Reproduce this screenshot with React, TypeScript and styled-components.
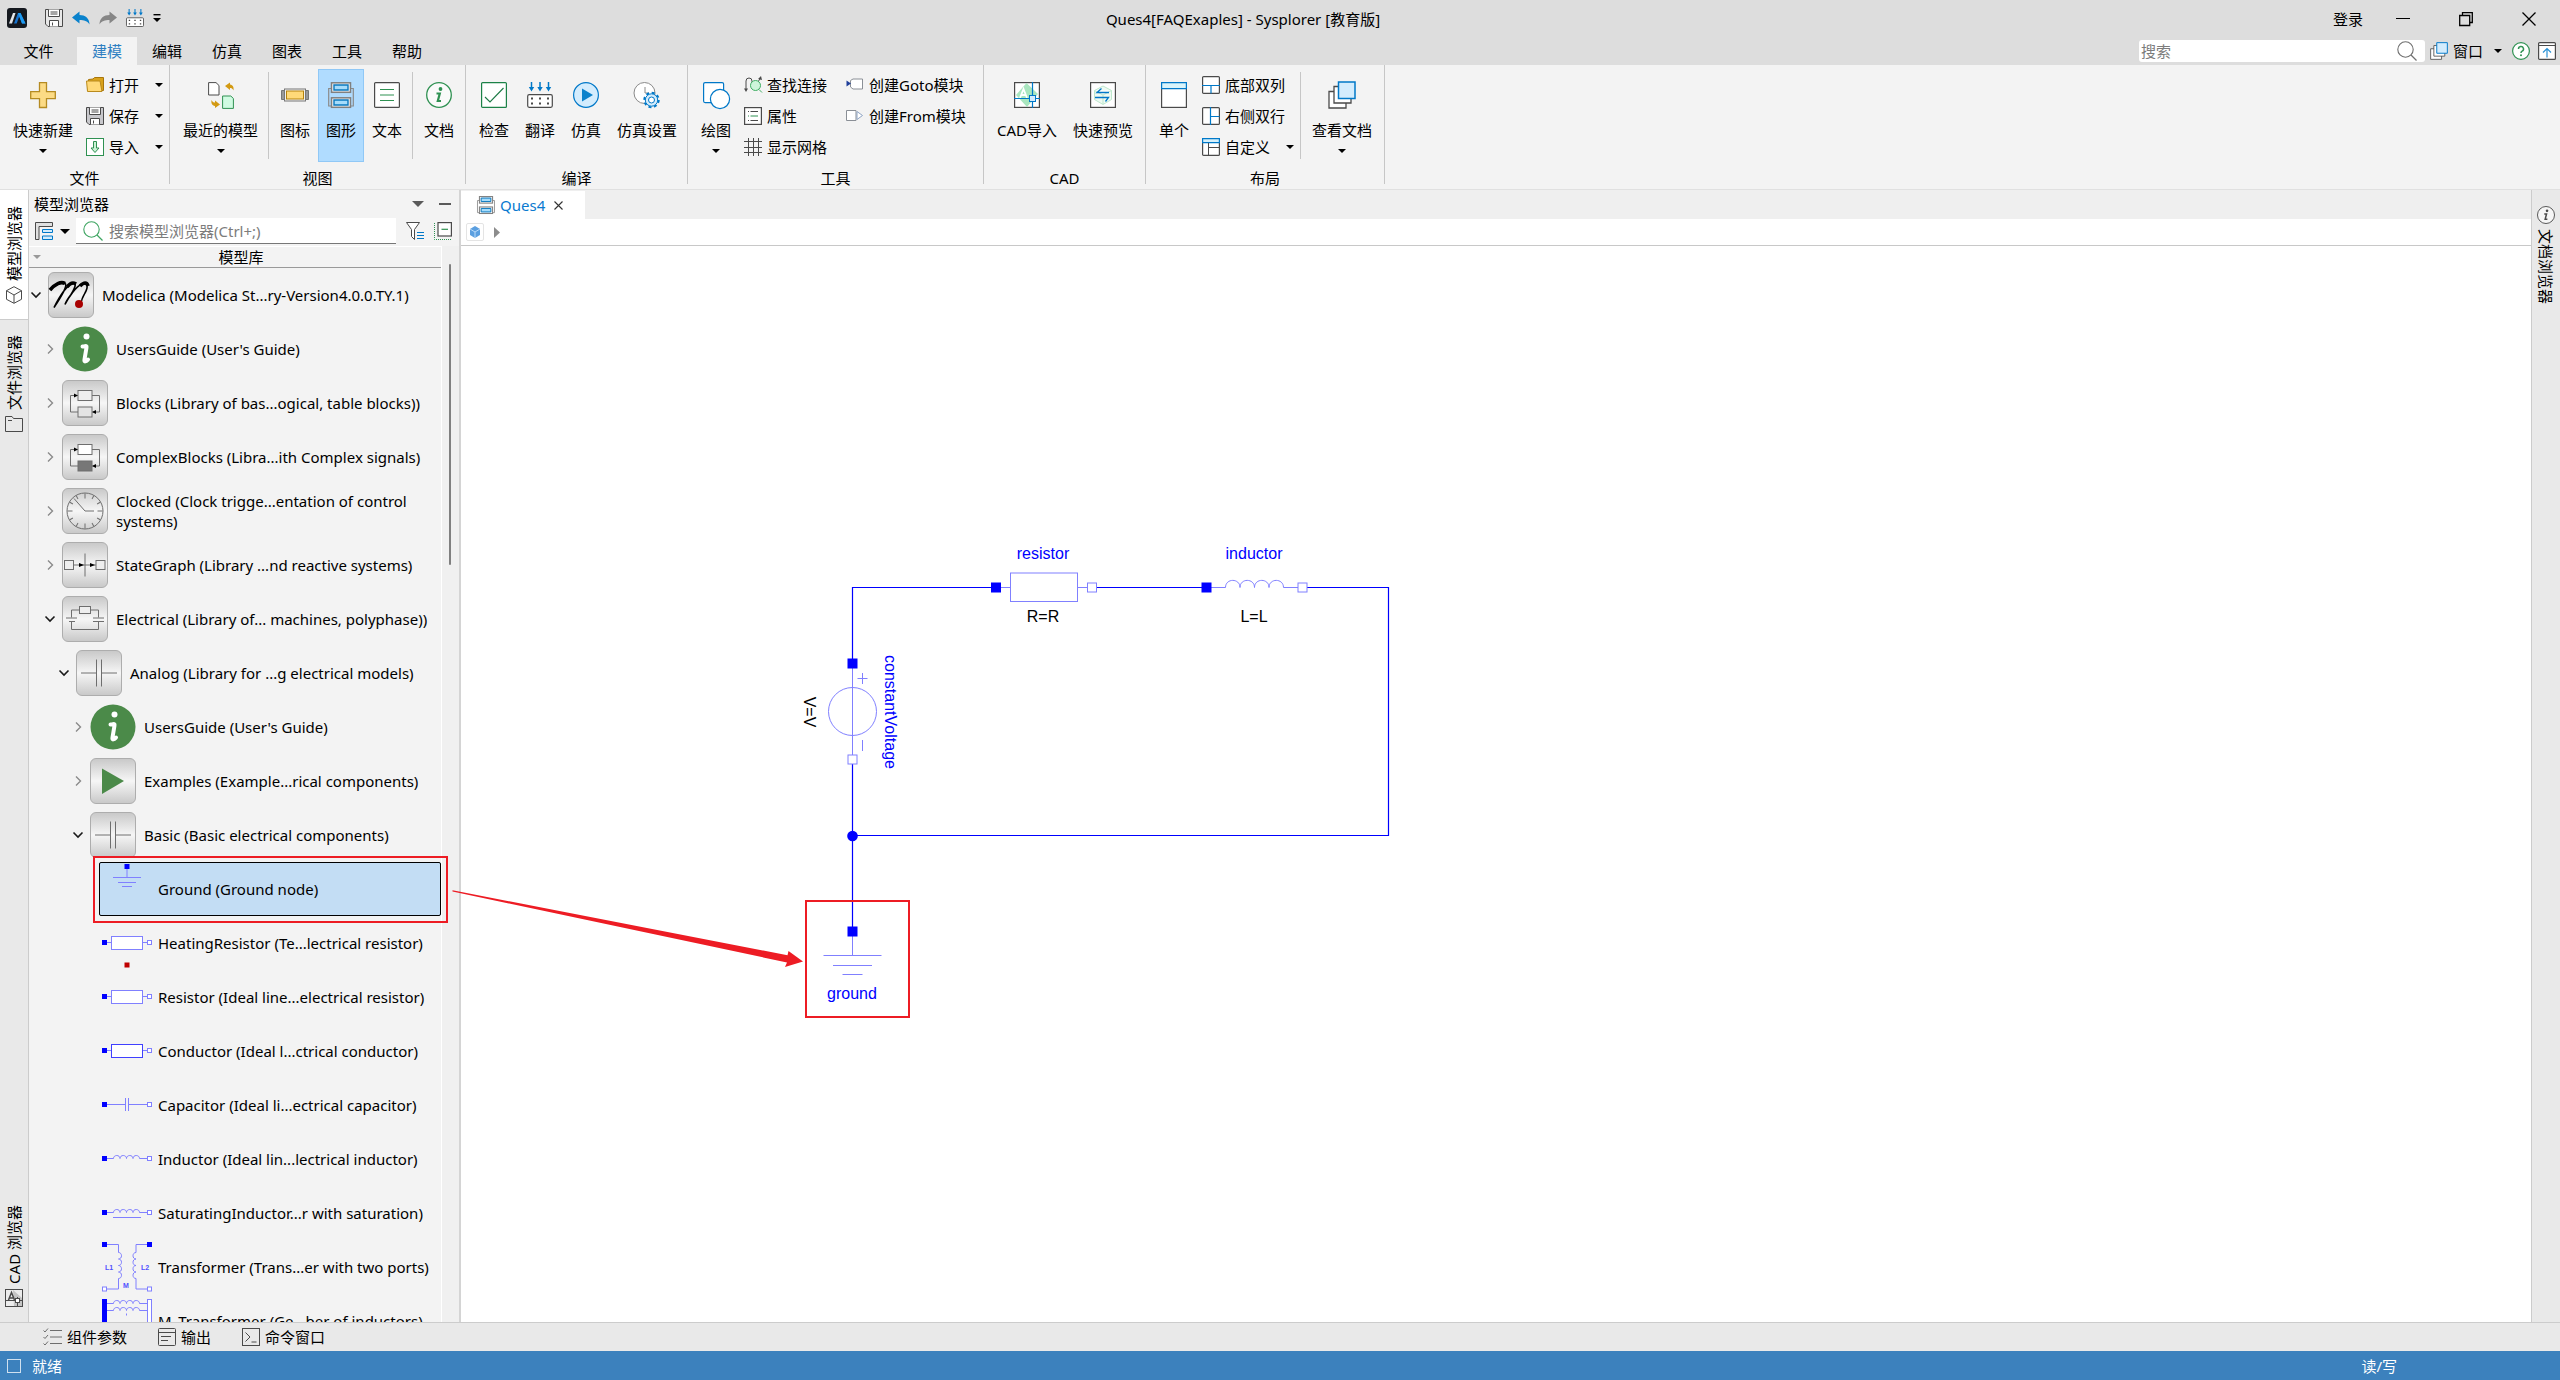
import React from 'react';
import styled, { createGlobalStyle, css } from 'styled-components';

const FONT = `'Noto Sans', 'Noto Sans CJK SC', sans-serif`;
const BLUE = '#0078c8';
const DARK = '#4a4a4a';
const GREEN = '#2f9152';
const WIRE = '#0000ff';
const PALE = '#8080ff';
const RED = '#ed1c24';

const GlobalStyle = createGlobalStyle`
  * { box-sizing: border-box; }
  body {
    margin: 0;
    overflow: hidden;
    background: #f3f3f3;
    color: #000;
    font-family: ${FONT};
    font-size: 15px;
    line-height: 20px;
  }
  button, input { font: inherit; color: inherit; }
  svg { display: block; flex: none; overflow: visible; }
`;

/* ---------- shared parts ---------- */

const PlainButton = styled.button`
  display: flex;
  align-items: center;
  border: 0;
  padding: 0;
  background: none;
  white-space: nowrap;
`;

const IconButton = styled(PlainButton)`
  justify-content: center;
  width: 18px;
  height: 18px;
`;

const CaretShape = styled.span<{ $size?: number; $color?: string }>`
  display: block;
  flex: none;
  width: 0;
  height: 0;
  border-style: solid;
  border-width: ${(p) => (p.$size ?? 4)}px ${(p) => (p.$size ?? 4)}px 0;
  border-color: ${(p) => p.$color ?? '#000'} transparent transparent;
`;

type SvgProps = { w?: number; h?: number; vb?: string; children: React.ReactNode };
const Svg = ({ w = 18, h, vb, children }: SvgProps) => (
  <svg width={w} height={h ?? w} viewBox={vb ?? `0 0 ${w} ${h ?? w}`} fill="none" aria-hidden="true">
    {children}
  </svg>
);

/* ---------- small icons, 18 x 18 ---------- */

const LogoIcon = () => (
  <Svg w={20}>
    <rect width="20" height="20" rx="3" fill="#15191f" />
    <path d="M2 15.500 6 5H8.500L5 15.500Z" fill="#e4e7ea" />
    <path d="M7 15.500 11 5H13.500L18.500 15.500H15L12.200 8.500 9.700 15.500Z" fill="#1673d0" />
    <path d="M11 5H13.500L18.500 15.500H15Z" fill="#1e9bf0" />
  </Svg>
);

const SaveIcon = ({ fill = '#e8e8e8' }: { fill?: string }) => (
  <Svg>
    <path d="M.5.5h17v17H3L.5 15Z" fill={fill} stroke={DARK} />
    <path d="M3.500.5v7h11v-7M5.500 3h7M5.500 5h7M4.500 17.500v-6h9v6" stroke={DARK} fill="#fff" />
    <path d="M7.500 13.500v3" stroke={DARK} />
  </Svg>
);

const UndoIcon = ({ color = '#0a82cc', flip = false }: { color?: string; flip?: boolean }) => (
  <Svg>
    <g transform={flip ? 'translate(18 0) scale(-1 1)' : undefined}>
      <path d="M0 8.500 7.500 2.500v3.500C13 6 17.500 9 17.500 15.500 15.500 12 12 11 7.500 11v3.500Z" fill={color} />
    </g>
  </Svg>
);

const TranslateIcon = ({ size = 18 }: { size?: number }) => (
  <Svg w={size} vb="0 0 26 26">
    <path d="M4.500 0v7M13 0v7M21.500 0v7" stroke={BLUE} strokeWidth="1.500" />
    <path d="M1.800 5h5.400L4.500 9.500ZM10.300 5h5.400L13 9.500ZM18.800 5h5.400L21.500 9.500Z" fill={BLUE} />
    <rect x=".7" y="12.700" width="24.600" height="12.600" rx="1.500" fill="#fff" stroke={DARK} strokeWidth="1.200" />
    <path d="M4 16.500h2M12 16.500h2M20 16.500h2M4 21.500h2M12 21.500h2M20 21.500h2" stroke={DARK} strokeWidth="2" />
  </Svg>
);

const CustomizeIcon = () => (
  <Svg w={8}>
    <path d="M.5.7h7" stroke="#000" strokeWidth="1.400" />
    <path d="M0 4h8L4 8Z" fill="#000" />
  </Svg>
);

const FolderIcon = () => (
  <Svg>
    <path d="M2.500 3.500 7 3l1.500-1.500h9v13H1.500Z" fill="#d9a21b" stroke="#a8760c" />
    <path d="M.5 5h13.500l2 10.500H1.500Z" fill="#ffd978" stroke="#b98a1c" />
  </Svg>
);

const ImportIcon = () => (
  <Svg>
    <rect x=".5" y=".5" width="17" height="17" fill="#fff" stroke={GREEN} />
    <path d="M7.500 3.500h3v6.500h2.500L9 14.500 5 10h2.500Z" fill="#c9f0d4" stroke={GREEN} />
  </Svg>
);

const FindLinkIcon = () => (
  <Svg>
    <path d="M2 14V5a3 3 0 0 1 6 0v7M8 12c0 3 4-3 5-5l3-4" stroke={DARK} />
    <path d="M0 12.500h4L2 16ZM14 3l3-3 1 4Z" fill={DARK} />
    <circle cx="11.500" cy="9.500" r="5" fill="#cdf5da" stroke="#3fae63" />
    <path d="m15 13.500 3 3" stroke="#3fae63" />
  </Svg>
);

const PropsIcon = () => (
  <Svg>
    <rect x=".6" y=".6" width="16.800" height="16.800" fill="#fff" stroke={DARK} strokeWidth="1.200" />
    <path d="M4 4.500h1M6.500 4.500h7.500M4 13.500h1M6.500 13.500h7.500" stroke={DARK} />
    <path d="M4 9h1M6.500 9h7.500" stroke={GREEN} />
  </Svg>
);

const GridIcon = () => (
  <Svg>
    <path d="M4.500 0v18M9.500 0v18M14.500 0v18M0 3.500h18M0 9.500h18M0 14.500h18" stroke={DARK} />
  </Svg>
);

const GotoIcon = () => (
  <Svg>
    <path d="M4.500 4.500 7 3h9.500v10H7L4.500 11Z" fill="#fff" stroke="#8a8f96" />
    <path d="M.5 4.500 5 7.500.5 10.500Z" fill="#1f3f9a" />
  </Svg>
);

const FromIcon = () => (
  <Svg>
    <path d="M.5 3.500h9.500v10H.5Z" fill="#fff" stroke="#8a8f96" />
    <path d="m11 4.500 5.500 4-5.500 4Z" fill="#fff" stroke="#8fa4c4" />
  </Svg>
);

const LayoutIcon = ({ kind }: { kind: 'bottom' | 'right' | 'custom' }) => (
  <Svg>
    <rect x=".6" y=".6" width="16.800" height="16.800" rx="1" fill="#fff" stroke={DARK} strokeWidth="1.200" />
    {kind === 'bottom' && <path d="M0 9.500h18M9 9.500v8" stroke={BLUE} strokeWidth="1.200" />}
    {kind === 'right' && <path d="M8.500 0v18M8.500 9.500h9" stroke={BLUE} strokeWidth="1.200" />}
    {kind === 'custom' && (
      <>
        <path d="M.6.6h16.800v4H.6Z" fill="#d5f0fb" stroke={BLUE} strokeWidth="1.200" />
        <path d="M6.500 5v13M6.500 9.500h11" stroke={DARK} />
      </>
    )}
  </Svg>
);

const WindowsIcon = ({ size = 18 }: { size?: number }) => (
  <Svg w={size} vb="0 0 28 28">
    <path d="M1 10.500h17v16.500H1Z" fill="#fff" stroke={DARK} strokeWidth="1.300" />
    <path d="M6 5.500h17V22H6Z" fill="#fff" stroke={DARK} strokeWidth="1.300" />
    <path d="M10.500 1h16.500v16.500H10.500Z" fill="#d3ecfd" stroke={BLUE} strokeWidth="1.500" />
  </Svg>
);

const HelpIcon = () => (
  <Svg>
    <circle cx="9" cy="9" r="8.400" fill="#fff" stroke={GREEN} strokeWidth="1.200" />
    <path d="M6.500 7a2.500 2.500 0 1 1 3.600 2.200c-.8.400-1.100.8-1.100 1.800" stroke={GREEN} strokeWidth="1.500" />
    <circle cx="9" cy="13.300" r="1" fill={GREEN} />
  </Svg>
);

const CollapseRibbonIcon = () => (
  <Svg>
    <rect x=".6" y=".6" width="16.800" height="16.800" rx="1" fill="#fff" stroke={DARK} strokeWidth="1.200" />
    <path d="M.5 3.500h17" stroke={DARK} />
    <path d="M9 15.500V7M5 10.500 9 6.500l4 4" stroke="#2a92d6" strokeWidth="1.200" />
  </Svg>
);

const SearchIcon = ({ color }: { color: string }) => (
  <Svg w={20}>
    <circle cx="8.500" cy="8.500" r="7.700" stroke={color} strokeWidth="1.100" />
    <path d="m14 14 5.500 5.500" stroke={color} strokeWidth="1.200" />
  </Svg>
);

const DiagramIcon = ({ size = 18 }: { size?: number }) => (
  <Svg w={size} vb="0 0 26 26">
    <path d="M4 6.500H.7V24H4M22 6.500h3.300V24H22" stroke="#8a8a8a" strokeWidth="1.200" />
    <rect x="3.500" y=".8" width="19" height="9.500" fill="#f4f4f4" stroke="#808080" strokeWidth="1.500" />
    <rect x="3.500" y="15.800" width="19" height="9.500" fill="#f4f4f4" stroke="#808080" strokeWidth="1.500" />
    <path d="M6 3h14v5H6ZM6 18h14v5H6Z" fill="#a6dcfb" stroke="#0a78be" strokeWidth="1.400" />
  </Svg>
);

const InfoIcon = ({ size = 18, color = DARK }: { size?: number; color?: string }) => (
  <Svg w={size} vb="0 0 26 26">
    <circle cx="13" cy="13" r="12.300" fill="#fff" fillOpacity=".6" stroke={color} strokeWidth="1.300" />
    <circle cx="14.500" cy="7" r="1.900" fill={color} />
    <path d="M10.500 11.500h3.300l-2 7.500h3.200" stroke={color} strokeWidth="2.200" />
  </Svg>
);

/* ---------- large ribbon icons, 26 to 28 px ---------- */

const PlusIcon = () => (
  <Svg w={26}>
    <path d="M9.500.7h7v9h8.800v7h-8.800v8.800h-7v-8.800H.7v-7h8.800Z" fill="#fcdb85" stroke="#b58b22" strokeWidth="1.300" />
  </Svg>
);

const RecentIcon = () => (
  <Svg w={26}>
    <path d="M.6.6h7.400L11 3.500V13H.6Z" fill="#fff" stroke={DARK} />
    <path d="M14.600 14h8.200l2.600 2.500v9.900H14.600Z" fill="#d0fbe2" stroke={GREEN} />
    <path d="m17 4 5-3.500v2c3 .3 4 3 3.500 6-1-2-2-2.500-3.500-2.500v2ZM12 22.500l-5 3.500v-2c-3-.3-4-3-3.500-6 1 2 2 2.500 3.500 2.500v-2Z" fill="#d39a12" />
  </Svg>
);

const IconViewIcon = () => (
  <Svg w={28} h={26}>
    <path d="M.5 8.500h4v9h-4ZM23.500 8.500h4v9h-4Z" fill="#999" stroke="#777" />
    <rect x="3.500" y="7" width="21" height="12" fill="#f0f0f0" stroke="#777" />
    <rect x="5.500" y="9" width="17" height="8" fill="#ffd978" stroke="#b5820c" />
  </Svg>
);

const TextViewIcon = () => (
  <Svg w={26}>
    <rect x=".6" y=".6" width="24.800" height="24.800" rx="1" fill="#fff" stroke={DARK} strokeWidth="1.200" />
    <path d="M6 7.500h14M6 13h14M6 18.500h14" stroke={GREEN} strokeWidth="1.200" />
  </Svg>
);

const CheckIcon = () => (
  <Svg w={26}>
    <rect x=".6" y=".6" width="24.800" height="24.800" rx="1" fill="#fff" stroke="#1c8248" strokeWidth="1.200" />
    <path d="m4 15 5 5L22.500 6" stroke="#1c7a45" strokeWidth="1.100" />
  </Svg>
);

const PlayIcon = () => (
  <Svg w={26}>
    <circle cx="13" cy="13" r="12.400" fill="#d3ecfd" stroke={BLUE} strokeWidth="1.200" />
    <path d="M9 6.500 20 13 9 19.500Z" fill="#0a82cc" />
  </Svg>
);

const SimSettingsIcon = () => (
  <Svg w={26}>
    <circle cx="10.500" cy="11" r="10.500" fill="#fff" stroke="#8a8a8a" />
    <path d="M11 5v6h4" stroke="#8a8a8a" />
    <circle cx="17.500" cy="18" r="7.200" stroke={BLUE} strokeWidth="2" strokeDasharray="3 2.650" />
    <circle cx="17.500" cy="18" r="6.200" fill="#d3ecfd" stroke={BLUE} />
    <circle cx="17.500" cy="18" r="3" fill="#fff" stroke={BLUE} />
  </Svg>
);

const DrawIcon = () => (
  <Svg w={27}>
    <rect x=".6" y=".6" width="20" height="20" rx="1.500" fill="#fff" stroke={BLUE} strokeWidth="1.200" />
    <circle cx="17" cy="17" r="9.600" fill="#fff" stroke={BLUE} strokeWidth="1.200" />
  </Svg>
);

const CadImportIcon = () => (
  <Svg w={26}>
    <rect x=".6" y=".6" width="24.800" height="24.800" fill="#fff" stroke={DARK} strokeWidth="1.200" />
    <path d="M12.500 1 24 12 13 25 2 13Z" fill="#a9e6bf" />
    <path d="m6 16 3.500-9 3.500 9M7.500 13h4.500" stroke="#fff" strokeWidth="1.800" />
    <path d="M18.500 0v26M0 16.500h26" stroke={BLUE} strokeWidth="1.200" />
    <rect x="15.500" y="13.500" width="6" height="6" fill="#d3ecfd" stroke={BLUE} />
  </Svg>
);

const PreviewIcon = () => (
  <Svg w={26}>
    <rect x=".6" y=".6" width="24.800" height="24.800" fill="#fff" stroke={DARK} strokeWidth="1.200" />
    <path d="m13 4 8.500 4.500v9L13 22.500l-8.500-5v-9ZM4.500 8.500 13 13l8.500-4.500M13 13v9" fill="#eefaf2" stroke="#bfe8cd" />
    <path d="M19 10.500H7l4.500-4M5 15.500h13.500l-3 4" stroke={BLUE} strokeWidth="1.300" />
  </Svg>
);

const SingleIcon = () => (
  <Svg w={26}>
    <rect x=".6" y=".6" width="24.800" height="24.800" fill="#fff" stroke={DARK} strokeWidth="1.200" />
    <path d="M.6.6h24.800v6H.6Z" fill="#d9f4fb" stroke={BLUE} strokeWidth="1.200" />
  </Svg>
);

/* ---------- title bar ---------- */

const Page = styled.div`
  display: flex;
  flex-direction: column;
  height: 100vh;
`;

const TitleBar = styled.header`
  display: flex;
  align-items: center;
  height: 37px;
  background: #ddd;
`;

const QuickAccess = styled.div`
  display: flex;
  align-items: center;
  gap: 9px;
  padding: 0 0 1px 7px;
`;

const LogoSlot = styled.span`
  margin-right: 9px;
`;

const WindowTitle = styled.h1`
  flex: 1;
  margin: 0;
  text-align: center;
  font-size: 15px;
  font-weight: 400;
`;

const LoginButton = styled(PlainButton)`
  padding: 0 8px;
`;

const WindowButton = styled(PlainButton)`
  justify-content: center;
  width: 63px;
  height: 36px;
`;

/* ---------- menu bar ---------- */

const MenuBar = styled.div`
  display: flex;
  align-items: center;
  height: 28px;
  padding-right: 4px;
  background: #ddd;
`;

const Tabs = styled.nav`
  display: flex;
  flex: 1;
  height: 100%;
`;

const MenuTab = styled(PlainButton)<{ $active?: boolean; $wide?: boolean }>`
  justify-content: center;
  width: ${(p) => (p.$wide ? 77 : 60)}px;
  height: 100%;
  ${(p) => p.$active && css`
    background: #f3f3f3;
    color: #2e7fc2;
  `}
`;

const TopSearch = styled.label`
  display: flex;
  align-items: center;
  width: 286px;
  height: 22px;
  padding: 0 8px 0 2px;
  border-radius: 3px;
  background: #fff;
`;

const SearchInput = styled.input`
  flex: 1;
  min-width: 0;
  height: 20px;
  padding: 0;
  border: 0;
  outline: 0;
  background: none;
  &::placeholder { color: #7c7c7c; opacity: 1; }
`;

const WindowMenu = styled(PlainButton)`
  gap: 5px;
  padding: 0 10px 0 5px;
`;

const MenuCaret = styled.span`
  padding-left: 6px;
`;

const MenuIcons = styled.div`
  display: flex;
  gap: 8px;
`;

/* ---------- ribbon ---------- */

const Ribbon = styled.section`
  display: flex;
  height: 125px;
  border-bottom: 1px solid #e0e0e0;
  background: #f3f3f3;
`;

const Group = styled.div<{ $width: number }>`
  display: flex;
  flex-direction: column;
  width: ${(p) => p.$width}px;
  height: 119px;
  border-right: 1px solid #c6c6c6;
`;

const GroupBody = styled.div`
  display: flex;
  flex: none;
  height: 103px;
  padding: 4px 0 0 5px;
`;

const GroupLabel = styled.div`
  text-align: center;
`;

const BigButton = styled(PlainButton)<{ $active?: boolean }>`
  flex-direction: column;
  height: 93px;
  padding: 12px 8px 0;
  ${(p) => p.$active && css`
    background: #b0dcff;
    box-shadow: inset 0 0 0 1px #90c8f6;
  `}
`;

const BigIcon = styled.span`
  display: flex;
  align-items: center;
  height: 28px;
  margin-bottom: 11px;
`;

const BigCaret = styled.span`
  display: flex;
  padding-top: 9px;
`;

const Divider = styled.span`
  width: 1px;
  height: 87px;
  margin: 3px 3px 0 2px;
  background: #c6c6c6;
`;

const SmallColumn = styled.div`
  display: flex;
  flex-direction: column;
  & + & { margin-left: 10px; }
`;

const SmallButton = styled(PlainButton)`
  gap: 5px;
  height: 31px;
  padding: 0 4px 0 5px;
`;

const SmallCaret = styled.span`
  padding-left: 11px;
`;

type BigProps = { icon: React.ReactNode; label: string; caret?: boolean; active?: boolean };
const Big = ({ icon, label, caret, active }: BigProps) => (
  <BigButton type="button" $active={active}>
    <BigIcon>{icon}</BigIcon>
    <span>{label}</span>
    {caret && <BigCaret><CaretShape /></BigCaret>}
  </BigButton>
);

const Small = ({ icon, label, caret }: { icon: React.ReactNode; label: string; caret?: boolean }) => (
  <SmallButton type="button">
    {icon}
    <span>{label}</span>
    {caret && <SmallCaret><CaretShape /></SmallCaret>}
  </SmallButton>
);

/* ---------- docks ---------- */

const Main = styled.main`
  position: relative;
  display: flex;
  flex: 1;
  min-height: 0;
`;

const Dock = styled.nav<{ $side: 'left' | 'right' }>`
  display: flex;
  flex-direction: column;
  flex: none;
  width: 29px;
  background: #e9e9e9;
  border: 0 solid #ccc;
  border-width: ${(p) => (p.$side === 'left' ? '0 1px 0 0' : '0 0 0 1px')};
`;

const DockTab = styled(PlainButton)<{ $active?: boolean }>`
  flex-direction: column;
  justify-content: center;
  gap: 5px;
  padding: 16px 0 15px;
  &:last-child:not(:first-child) { margin-top: auto; }
  ${(p) => p.$active && css`
    background: #fff;
    box-shadow: 0 1px 0 #ccc;
  `}
`;

const SideText = styled.span<{ $up?: boolean }>`
  writing-mode: vertical-rl;
  text-orientation: sideways;
  ${(p) => p.$up && css`transform: rotate(180deg);`}
`;

/* ---------- model browser ---------- */

const Panel = styled.aside`
  display: flex;
  flex-direction: column;
  flex: none;
  width: 432px;
  border-right: 2px solid #d4d4d4;
`;

const PanelHeader = styled.div`
  display: flex;
  align-items: center;
  gap: 15px;
  height: 28px;
  padding: 0 8px 0 5px;
`;

const PanelTitle = styled.h2`
  flex: 1;
  margin: 0;
  font-size: 15px;
  font-weight: 400;
`;

const PanelTools = styled.div`
  display: flex;
  align-items: center;
  gap: 10px;
  height: 28px;
  padding: 0 7px 2px 6px;
`;

const ModeButton = styled(PlainButton)`
  gap: 7px;
  margin-right: -4px;
`;

const BrowserSearch = styled.label`
  display: flex;
  align-items: center;
  flex: 1;
  gap: 6px;
  height: 26px;
  padding-left: 7px;
  border-bottom: 1px solid #777;
  background: #fff;
`;

const TreeArea = styled.div`
  display: flex;
  flex: 1;
  min-height: 0;
`;

const TreeColumn = styled.div`
  display: flex;
  flex-direction: column;
  flex: 1;
  min-width: 0;
  border-right: 1px solid #fff;
`;

const ScrollBar = styled.div`
  width: 17px;
  padding: 18px 0 0 7px;
  background: #f0f0f0;
`;

const ScrollThumb = styled.div`
  width: 2px;
  height: 301px;
  border-radius: 1px;
  background: #808080;
`;

const TreeHeader = styled.div`
  display: flex;
  align-items: center;
  flex: none;
  height: 22px;
  padding-left: 4px;
  border-top: 1px solid #fff;
  border-bottom: 1px solid #999;
`;

const TreeHeaderText = styled.span`
  flex: 1;
  text-align: center;
`;

const Tree = styled.ul`
  flex: 1;
  min-height: 0;
  margin: 0;
  padding: 0;
  overflow: hidden;
  list-style: none;
`;

const TreeRow = styled.li<{ $level: number }>`
  display: flex;
  align-items: center;
  height: 54px;
  padding-left: ${(p) => p.$level * 14}px;
`;

const ChevronCell = styled.span`
  display: flex;
  justify-content: center;
  flex: none;
  width: 14px;
`;

const TreeItem = styled.div<{ $selected?: boolean }>`
  display: flex;
  align-items: center;
  flex: 1;
  gap: 8px;
  min-width: 0;
  height: 54px;
  padding-left: 5px;
  ${(p) => p.$selected && css`
    background: #c3ddf4;
    outline: 1px solid #000;
    outline-offset: -1px;
    border-radius: 2px;
  `}
`;

const Tile = styled.span`
  flex: none;
  width: 46px;
  height: 46px;
  border: 1px solid #adadad;
  border-radius: 6px;
  background: linear-gradient(#c9c9c9, #f6f6f6 50%, #c9c9c9);
`;

const Bare = styled.span`
  flex: none;
  width: 46px;
  height: 46px;
`;

const G = '#6e6e6e';

const ModelicaArt = () => (
  <Svg w={44}>
    <path d="M1 17C6 12 12 9 16 10.500c3 1.500-3 12-11 24 5-10 12-21 18-24 4-1.500 5 1-1 11-3 4-5 7-6 10 4-8 11-18 17-20.500 5-1.500 7 2 3 9-2 4-4 7-3 8" stroke="#000" strokeWidth="1.600" />
    <path d="M1 17C6 11 12 8 16 10.500M18 14c3-4 6-5 9-3M31 13c4-4 7-4 8 0" stroke="#000" strokeWidth="3.600" />
    <circle cx="30" cy="31" r="4" fill="#a80000" />
  </Svg>
);

const GuideArt = () => (
  <Svg w={46}>
    <circle cx="23" cy="23" r="22.500" fill="#4b8a49" />
    <circle cx="24.500" cy="10.500" r="3" fill="#fff" />
    <path d="M20.500 20.500c3 0 4.500-1.500 4 1L22.500 33.500c-.5 3 1.500 2 3.500 0" stroke="#fff" strokeWidth="4" strokeLinecap="round" />
  </Svg>
);

const BlocksArt = ({ complex }: { complex?: boolean }) => (
  <Svg w={44}>
    <path d="M15 14.500H7.500V31H15M29 14.500h7.500V31H29" stroke={G} />
    <path d="m11 12.500 4 2-4 2ZM33 29l-4 2 4 2Z" fill="#000" />
    <rect x="15" y="9.500" width="14" height="10" fill={complex ? '#fff' : '#eee'} stroke={G} />
    <rect x="15" y="26" width="14" height="10" fill={complex ? '#777' : '#e4e4e4'} stroke={G} />
  </Svg>
);

const ClockArt = () => (
  <Svg w={44}>
    <circle cx="22" cy="22" r="18" stroke={G} />
    {Array.from({ length: 12 }, (_, i) => (
      <path key={i} d={i % 3 === 0 ? 'M22 4.500v5' : 'M22 4.500v3.500'} stroke={G} transform={`rotate(${i * 30} 22 22)`} />
    ))}
    <path d="M11 9.500 22 22h9" stroke={G} />
  </Svg>
);

const StateArt = () => (
  <Svg w={44}>
    <path d="M10 22h24M22 10.500v23" stroke={G} />
    <path d="m16 20 5 2-5 2ZM27 20l5 2-5 2Z" fill="#000" />
    <rect x="1.500" y="17.500" width="9" height="9" fill="#eee" stroke={G} />
    <rect x="33" y="17.500" width="9" height="9" fill="#eee" stroke={G} />
  </Svg>
);

const ElectricalArt = () => (
  <Svg w={44}>
    <path d="M8.500 20.500v-7.500H16M28 13h7.500v7.500M8.500 24v8.500h27V24M3 21h11M6 24.500h6M30 21h11M30 24.500h11" stroke={G} />
    <rect x="16.500" y="9.500" width="11" height="7" fill="#eee" stroke={G} />
  </Svg>
);

const CapTileArt = () => (
  <Svg w={44}>
    <path d="M4 22h15.500M24.500 22H40M19.500 8.500v27M24.500 8.500v27" stroke={G} />
  </Svg>
);

const PlayTileArt = () => (
  <Svg w={44}>
    <path d="M11 9.500 33 22 11 35Z" fill="#4b8a49" />
  </Svg>
);

const FilledPin = ({ x, y }: { x: number; y: number }) => (
  <rect x={x - 2.500} y={y - 2.500} width="5" height="5" fill={WIRE} />
);
const OpenPin = ({ x, y }: { x: number; y: number }) => (
  <rect x={x - 2} y={y - 2} width="4" height="4" fill="#fff" stroke={PALE} />
);
const COIL = 'M9.500 22.500c0-4 6.500-4 6.500 0 0-4 6.500-4 6.500 0 0-4 6.500-4 6.500 0 0-4 6.500-4 6.500 0';

const GroundArt = () => (
  <Svg w={46}>
    <path d="M23 2v9M9 11.500h28M14 16.500h18M18 20.500h10" stroke={PALE} />
    <FilledPin x={23} y={.5} />
  </Svg>
);

const ResistorArt = ({ heat, strong }: { heat?: boolean; strong?: boolean }) => (
  <Svg w={46}>
    <path d="M2 22.500h42" stroke={PALE} />
    <rect x="7.500" y="16.500" width="31" height="13" fill="#fff" stroke={strong ? '#4040ff' : PALE} />
    <FilledPin x={.5} y={22.500} />
    <OpenPin x={45.500} y={22.500} />
    {heat && <rect x="20.500" y="42.500" width="5" height="5" fill="#bf0000" />}
  </Svg>
);

const CapacitorArt = () => (
  <Svg w={46}>
    <path d="M2 22.500h19.500M24.500 22.500h19M21.500 16v13M24.500 16v13" stroke={PALE} />
    <FilledPin x={.5} y={22.500} />
    <OpenPin x={45.500} y={22.500} />
  </Svg>
);

const InductorArt = ({ core }: { core?: boolean }) => (
  <Svg w={46}>
    <path d={`M2 22.500h7.500${COIL}h8`} stroke={PALE} />
    {core && <path d="M9 27.500h28" stroke={PALE} />}
    <FilledPin x={.5} y={22.500} />
    <OpenPin x={45.500} y={22.500} />
  </Svg>
);

const SmallSvgText = styled.text`
  font: bold 7px 'Liberation Sans', sans-serif;
  fill: #5050ff;
`;

const TransformerArt = () => (
  <Svg w={46}>
    <path d="M1 .5h13.500v8c4 0 4 6.500 0 6.500 4 0 4 6.500 0 6.500 4 0 4 6.500 0 6.500 4 0 4 6.500 0 6.500v10.500H1M45 .5H32v8c-4 0-4 6.500 0 6.500-4 0-4 6.500 0 6.500-4 0-4 6.500 0 6.500-4 0-4 6.500 0 6.500v10.500h13" stroke={PALE} />
    <FilledPin x={.5} y={.5} />
    <FilledPin x={45.500} y={.5} />
    <OpenPin x={.5} y={45} />
    <OpenPin x={45.500} y={45} />
    <SmallSvgText x="1" y="26">L1</SmallSvgText>
    <SmallSvgText x="37" y="26">L2</SmallSvgText>
    <SmallSvgText x="19" y="44">M</SmallSvgText>
  </Svg>
);

const MTransformerArt = () => (
  <Svg w={46}>
    <path d="M2 5.500h7.500M35.500 5.500h8M2 12.500h7.500M35.500 12.500h8" stroke={PALE} />
    <path d={COIL} stroke={PALE} transform="translate(0 -17)" />
    <path d={COIL} stroke={PALE} transform="translate(0 -10)" />
    <path d="M22.500 15.500v2" stroke={PALE} />
    <rect x="-2" y="1" width="5" height="44" fill={WIRE} />
    <rect x="43.500" y="1.500" width="4" height="43" fill="#fff" stroke={PALE} />
  </Svg>
);

type Node = { level: number; open?: boolean; leaf?: boolean; tile?: boolean; selected?: boolean; art: React.ReactNode; text: string };
const NODES: Node[] = [
  { level: 0, open: true, tile: true, art: <ModelicaArt />, text: 'Modelica (Modelica St...ry-Version4.0.0.TY.1)' },
  { level: 1, art: <GuideArt />, text: "UsersGuide (User's Guide)" },
  { level: 1, tile: true, art: <BlocksArt />, text: 'Blocks (Library of bas...ogical, table blocks))' },
  { level: 1, tile: true, art: <BlocksArt complex />, text: 'ComplexBlocks (Libra...ith Complex signals)' },
  { level: 1, tile: true, art: <ClockArt />, text: 'Clocked (Clock trigge...entation of control systems)' },
  { level: 1, tile: true, art: <StateArt />, text: 'StateGraph (Library ...nd reactive systems)' },
  { level: 1, open: true, tile: true, art: <ElectricalArt />, text: 'Electrical (Library of... machines, polyphase))' },
  { level: 2, open: true, tile: true, art: <CapTileArt />, text: 'Analog (Library for ...g electrical models)' },
  { level: 3, art: <GuideArt />, text: "UsersGuide (User's Guide)" },
  { level: 3, tile: true, art: <PlayTileArt />, text: 'Examples (Example...rical components)' },
  { level: 3, open: true, tile: true, art: <CapTileArt />, text: 'Basic (Basic electrical components)' },
  { level: 4, leaf: true, selected: true, art: <GroundArt />, text: 'Ground (Ground node)' },
  { level: 4, leaf: true, art: <ResistorArt heat />, text: 'HeatingResistor (Te...lectrical resistor)' },
  { level: 4, leaf: true, art: <ResistorArt />, text: 'Resistor (Ideal line...electrical resistor)' },
  { level: 4, leaf: true, art: <ResistorArt strong />, text: 'Conductor (Ideal l...ctrical conductor)' },
  { level: 4, leaf: true, art: <CapacitorArt />, text: 'Capacitor (Ideal li...ectrical capacitor)' },
  { level: 4, leaf: true, art: <InductorArt />, text: 'Inductor (Ideal lin...lectrical inductor)' },
  { level: 4, leaf: true, art: <InductorArt core />, text: 'SaturatingInductor...r with saturation)' },
  { level: 4, leaf: true, art: <TransformerArt />, text: 'Transformer (Trans...er with two ports)' },
  { level: 4, leaf: true, art: <MTransformerArt />, text: 'M_Transformer (Ge...ber of inductors)' },
];

const Chevron = ({ open }: { open?: boolean }) => (
  <Svg w={10}>
    {open ? <path d="m.5 2.500 4.500 4.500 4.500-4.500" stroke="#1a1a1a" strokeWidth="1.600" /> : <path d="m3 .5 4.500 4.500L3 9.500" stroke="#8a8a8a" strokeWidth="1.400" />}
  </Svg>
);

/* ---------- editor ---------- */

const Editor = styled.section`
  display: flex;
  flex-direction: column;
  flex: 1;
  min-width: 0;
  background: #fff;
`;

const EditorTabs = styled.div`
  display: flex;
  height: 29px;
  padding-top: 1px;
  background: #efefef;
`;

const EditorTab = styled.div`
  display: flex;
  align-items: center;
  gap: 5px;
  width: 124px;
  padding-left: 16px;
  background: #fff;
  color: #0a7ad0;
`;

const CloseTab = styled(PlainButton)`
  padding-left: 4px;
`;

const Breadcrumb = styled.div`
  display: flex;
  align-items: center;
  gap: 10px;
  height: 27px;
  padding-left: 5px;
  border-bottom: 1px solid #c8c8c8;
`;

const CrumbButton = styled(IconButton)`
  border: 1px solid #e4e4e4;
  border-radius: 2px;
`;

const Canvas = styled.div`
  position: relative;
  flex: 1;
  min-height: 0;
`;

const CircuitSvg = styled.svg`
  position: absolute;
  inset: 0;
  width: 100%;
  height: 100%;
  overflow: hidden;
`;

const CircuitText = styled.text<{ $value?: boolean }>`
  font: 16px 'Liberation Sans', sans-serif;
  fill: ${(p) => (p.$value ? '#000' : WIRE)};
  text-anchor: middle;
`;

const Solid = ({ x, y }: { x: number; y: number }) => <rect x={x - 5} y={y - 5} width="10" height="10" fill={WIRE} />;
const Hollow = ({ x, y }: { x: number; y: number }) => (
  <rect x={x - 4.500} y={y - 4.500} width="9" height="9" fill="#fff" stroke={PALE} />
);

const Circuit = () => (
  <CircuitSvg role="img" aria-label="Ques4">
    <g transform="translate(-461 -246)" fill="none">
      <path d="M852.500 664V587.500H996M1092 587.500h115M1302 587.500H1388.500V835.500H852.500M852.500 760V932" stroke={WIRE} strokeWidth="1.200" />
      <g stroke={PALE}>
        <path d="M1000 587.500h88" />
        <rect x="1010.500" y="573" width="67" height="28.500" fill="#fff" />
        <path d="M1211 587.500h14.500c0-9.500 14.500-9.500 14.500 0 0-9.500 14.500-9.500 14.500 0 0-9.500 14.500-9.500 14.500 0 0-9.500 14.500-9.500 14.500 0H1298" />
        <circle cx="852.500" cy="711.500" r="24" />
        <path d="M852.500 668v87M862.500 673v11M857.500 678.500h10M862.500 740v11" />
        <path d="M852.500 936v19.500M823.500 955.500h58M833 965.500h39M842.500 974.500h20" />
      </g>
      <Solid x={996} y={587.500} />
      <Hollow x={1092} y={587.500} />
      <Solid x={1206.500} y={587.500} />
      <Hollow x={1302.500} y={587.500} />
      <Solid x={852.500} y={663.500} />
      <Hollow x={852.500} y={759.500} />
      <circle cx="852.500" cy="836" r="5.300" fill={WIRE} />
      <Solid x={852.500} y={931.500} />
      <CircuitText x="1043" y="559">resistor</CircuitText>
      <CircuitText x="1254" y="559">inductor</CircuitText>
      <CircuitText x="1043" y="622" $value>R=R</CircuitText>
      <CircuitText x="1254" y="622" $value>L=L</CircuitText>
      <CircuitText x="852" y="999">ground</CircuitText>
      <CircuitText transform="translate(885 712) rotate(90)">constantVoltage</CircuitText>
      <CircuitText transform="translate(804 712) rotate(90)" $value>V=V</CircuitText>
    </g>
  </CircuitSvg>
);

const AnnotationLayer = styled.svg`
  position: absolute;
  inset: 0;
  width: 100%;
  height: 100%;
  pointer-events: none;
`;

const Annotations = () => (
  <AnnotationLayer aria-hidden="true">
    <g transform="translate(0 -190)" fill="none">
      <rect x="94" y="857" width="353" height="65" stroke={RED} strokeWidth="2" />
      <rect x="806" y="901" width="103" height="116" stroke={RED} strokeWidth="2" />
      <path d="M452.500 890.300 787.500 955.300 788.500 951 803 961.500 785 967 787 962.500 452.500 891.600Z" fill={RED} />
    </g>
  </AnnotationLayer>
);

/* ---------- bottom bars ---------- */

const OutputBar = styled.nav`
  display: flex;
  align-items: center;
  gap: 31px;
  height: 29px;
  padding-left: 43px;
  border-top: 1px solid #ccc;
  background: #e9e9e9;
`;

const OutputButton = styled(PlainButton)`
  gap: 5px;
`;

const StatusBar = styled.footer`
  display: flex;
  align-items: center;
  gap: 11px;
  height: 29px;
  padding: 0 163px 0 7px;
  background: #3c81bd;
  color: #fff;
`;

const StatusText = styled.span`
  flex: 1;
`;

const MENUS = ['文件', '建模', '编辑', '仿真', '图表', '工具', '帮助'];

export default function App() {
  return (
    <Page>
      <GlobalStyle />
      <TitleBar>
        <QuickAccess>
          <LogoSlot><LogoIcon /></LogoSlot>
          <IconButton type="button" aria-label="保存"><SaveIcon /></IconButton>
          <IconButton type="button" aria-label="撤销"><UndoIcon /></IconButton>
          <IconButton type="button" aria-label="重做"><UndoIcon flip color="#868686" /></IconButton>
          <IconButton type="button" aria-label="翻译"><TranslateIcon /></IconButton>
          <PlainButton type="button" aria-label="自定义"><CustomizeIcon /></PlainButton>
        </QuickAccess>
        <WindowTitle>Ques4[FAQExaples] - Sysplorer [教育版]</WindowTitle>
        <LoginButton type="button">登录</LoginButton>
        <WindowButton type="button" aria-label="最小化">
          <Svg w={14}><path d="M0 6.500h14" stroke="#000" /></Svg>
        </WindowButton>
        <WindowButton type="button" aria-label="还原">
          <Svg w={14}><path d="M.7 3.500h10v10h-10ZM3.500 3.500V.7h9.800v9.800h-2.600" stroke="#000" strokeWidth="1.300" /></Svg>
        </WindowButton>
        <WindowButton type="button" aria-label="关闭">
          <Svg w={14}><path d="m.5.5 13 13M13.500.5l-13 13" stroke="#000" strokeWidth="1.300" /></Svg>
        </WindowButton>
      </TitleBar>

      <MenuBar>
        <Tabs>
          {MENUS.map((m, i) => (
            <MenuTab key={m} type="button" $wide={i === 0} $active={i === 1}>{m}</MenuTab>
          ))}
        </Tabs>
        <TopSearch>
          <SearchInput placeholder="搜索" aria-label="搜索" />
          <SearchIcon color="#6f6f6f" />
        </TopSearch>
        <WindowMenu type="button">
          <WindowsIcon />
          <span>窗口</span>
          <MenuCaret><CaretShape /></MenuCaret>
        </WindowMenu>
        <MenuIcons>
          <IconButton type="button" aria-label="帮助"><HelpIcon /></IconButton>
          <IconButton type="button" aria-label="折叠功能区"><CollapseRibbonIcon /></IconButton>
        </MenuIcons>
      </MenuBar>

      <Ribbon>
        <Group $width={170}>
          <GroupBody>
            <Big icon={<PlusIcon />} label="快速新建" caret />
            <SmallColumn>
              <Small icon={<FolderIcon />} label="打开" caret />
              <Small icon={<SaveIcon fill="#c8c8cc" />} label="保存" caret />
              <Small icon={<ImportIcon />} label="导入" caret />
            </SmallColumn>
          </GroupBody>
          <GroupLabel>文件</GroupLabel>
        </Group>
        <Group $width={296}>
          <GroupBody>
            <Big icon={<RecentIcon />} label="最近的模型" caret />
            <Divider />
            <Big icon={<IconViewIcon />} label="图标" />
            <Big icon={<DiagramIcon size={26} />} label="图形" active />
            <Big icon={<TextViewIcon />} label="文本" />
            <Divider />
            <Big icon={<InfoIcon size={26} color={GREEN} />} label="文档" />
          </GroupBody>
          <GroupLabel>视图</GroupLabel>
        </Group>
        <Group $width={222}>
          <GroupBody>
            <Big icon={<CheckIcon />} label="检查" />
            <Big icon={<TranslateIcon size={26} />} label="翻译" />
            <Big icon={<PlayIcon />} label="仿真" />
            <Big icon={<SimSettingsIcon />} label="仿真设置" />
          </GroupBody>
          <GroupLabel>编译</GroupLabel>
        </Group>
        <Group $width={296}>
          <GroupBody>
            <Big icon={<DrawIcon />} label="绘图" caret />
            <SmallColumn>
              <Small icon={<FindLinkIcon />} label="查找连接" />
              <Small icon={<PropsIcon />} label="属性" />
              <Small icon={<GridIcon />} label="显示网格" />
            </SmallColumn>
            <SmallColumn>
              <Small icon={<GotoIcon />} label="创建Goto模块" />
              <Small icon={<FromIcon />} label="创建From模块" />
            </SmallColumn>
          </GroupBody>
          <GroupLabel>工具</GroupLabel>
        </Group>
        <Group $width={162}>
          <GroupBody>
            <Big icon={<CadImportIcon />} label="CAD导入" />
            <Big icon={<PreviewIcon />} label="快速预览" />
          </GroupBody>
          <GroupLabel>CAD</GroupLabel>
        </Group>
        <Group $width={239}>
          <GroupBody>
            <Big icon={<SingleIcon />} label="单个" />
            <SmallColumn>
              <Small icon={<LayoutIcon kind="bottom" />} label="底部双列" />
              <Small icon={<LayoutIcon kind="right" />} label="右侧双行" />
              <Small icon={<LayoutIcon kind="custom" />} label="自定义" caret />
            </SmallColumn>
            <Divider />
            <Big icon={<WindowsIcon size={28} />} label="查看文档" caret />
          </GroupBody>
          <GroupLabel>布局</GroupLabel>
        </Group>
      </Ribbon>

      <Main>
        <Dock $side="left">
          <DockTab type="button" $active>
            <SideText $up>模型浏览器</SideText>
            <Svg><path d="m9 .7 7.500 4v8.600L9 17.300l-7.500-4V4.700ZM1.500 4.700 9 9l7.500-4.300M9 9v8" stroke={DARK} /></Svg>
          </DockTab>
          <DockTab type="button">
            <SideText $up>文件浏览器</SideText>
            <Svg><path d="M.5 1.500h6.500l1.500 2h9V16.500H.5ZM3 5.500h4" stroke={DARK} /></Svg>
          </DockTab>
          <DockTab type="button">
            <SideText $up>CAD 浏览器</SideText>
            <Svg>
              <rect x=".5" y=".5" width="17" height="17" fill="#ececec" stroke={DARK} />
              <path d="m8 1 9 8v8H9Z" fill="#c4c4c4" />
              <path d="m3.500 11 3-7.500 3 7.500M4.500 9h4" stroke={DARK} strokeWidth="1.500" />
              <path d="M0 11.500h18M12.500 8v10" stroke={DARK} />
              <rect x="10.500" y="9.500" width="4" height="4" fill="#fff" stroke={DARK} />
            </Svg>
          </DockTab>
        </Dock>

        <Panel>
          <PanelHeader>
            <PanelTitle>模型浏览器</PanelTitle>
            <PlainButton type="button" aria-label="选项"><CaretShape $size={6} $color="#5a5a5a" /></PlainButton>
            <PlainButton type="button" aria-label="隐藏"><Svg w={12} h={2}><path d="M0 1h12" stroke="#5a5a5a" strokeWidth="2" /></Svg></PlainButton>
          </PanelHeader>
          <PanelTools>
            <ModeButton type="button" aria-label="视图模式">
              <Svg>
                <path d="M17.500.5H.5v17H4V4.500h13.500Z" fill="#e0e0e0" stroke={DARK} />
                <path d="M7.500 7.500h10v3h-10ZM7.500 14h10v3.500h-10Z" fill="#d3ecfd" stroke={BLUE} />
              </Svg>
              <CaretShape $size={5} />
            </ModeButton>
            <BrowserSearch>
              <SearchIcon color="#3fa562" />
              <SearchInput placeholder="搜索模型浏览器(Ctrl+;)" aria-label="搜索模型浏览器" />
            </BrowserSearch>
            <IconButton type="button" aria-label="过滤">
              <Svg>
                <path d="M.5.500h13l-5 7v10l-3-3v-7Z" fill="#fff" stroke={DARK} />
                <path d="M11 10.500h7M11 13.500h7M11 16.500h7" stroke={BLUE} />
              </Svg>
            </IconButton>
            <IconButton type="button" aria-label="全部折叠">
              <Svg>
                <rect x="4" y=".6" width="13.400" height="13.400" fill="#fff" stroke={DARK} strokeWidth="1.200" />
                <path d="M7.500 7.300h6.500" stroke={GREEN} strokeWidth="1.200" />
                <path d="M.5 1v16.500H18" stroke={GREEN} strokeDasharray="1 1" />
              </Svg>
            </IconButton>
          </PanelTools>
          <TreeArea>
            <TreeColumn>
              <TreeHeader>
                <CaretShape $color="#999" />
                <TreeHeaderText>模型库</TreeHeaderText>
              </TreeHeader>
              <Tree role="tree">
                {NODES.map((n, i) => (
                  <TreeRow key={i} role="treeitem" $level={n.level} aria-selected={!!n.selected}>
                    <ChevronCell>{!n.leaf && <Chevron open={n.open} />}</ChevronCell>
                    <TreeItem $selected={n.selected}>
                      {n.tile ? <Tile>{n.art}</Tile> : <Bare>{n.art}</Bare>}
                      <span>{n.text}</span>
                    </TreeItem>
                  </TreeRow>
                ))}
              </Tree>
            </TreeColumn>
            <ScrollBar><ScrollThumb /></ScrollBar>
          </TreeArea>
        </Panel>

        <Editor>
          <EditorTabs>
            <EditorTab>
              <DiagramIcon />
              <span>Ques4</span>
              <CloseTab type="button" aria-label="关闭标签">
                <Svg w={9}><path d="m.5.5 8 8M8.500.5l-8 8" stroke="#333" strokeWidth="1.100" /></Svg>
              </CloseTab>
            </EditorTab>
          </EditorTabs>
          <Breadcrumb>
            <CrumbButton type="button" aria-label="Ques4">
              <Svg w={10} h={12}>
                <path d="m5 0 5 3v6l-5 3-5-3V3Z" fill="#5b9fe0" />
                <path d="m0 3 5 3 5-3M5 6v6" stroke="#b9dafa" />
              </Svg>
            </CrumbButton>
            <Svg w={6} h={11}><path d="M0 0 6 5.500 0 11Z" fill="#8c8c8c" /></Svg>
          </Breadcrumb>
          <Canvas><Circuit /></Canvas>
        </Editor>

        <Dock $side="right">
          <DockTab type="button">
            <InfoIcon />
            <SideText>文档浏览器</SideText>
          </DockTab>
        </Dock>
        <Annotations />
      </Main>

      <OutputBar>
        <OutputButton type="button">
          <Svg w={19} h={18}>
            <path d="m.5 2.500 1.500 1.500 3-3.500M.5 9l1.500 1.500 3-3.500M.5 15.500 2 17l3-3.500M7 2.500h12M7 9h12M7 15.500h12" stroke={G} />
          </Svg>
          组件参数
        </OutputButton>
        <OutputButton type="button">
          <Svg>
            <rect x=".5" y=".5" width="17" height="17" rx="1" stroke={DARK} />
            <path d="M.5 4.500h17M3 8.500h10M3 12.500h7" stroke={DARK} />
          </Svg>
          输出
        </OutputButton>
        <OutputButton type="button">
          <Svg>
            <rect x=".5" y=".5" width="17" height="17" stroke={DARK} />
            <path d="m3.500 4.500 4.500 4.500-4.500 4.500M9.500 14h5" stroke={DARK} />
          </Svg>
          命令窗口
        </OutputButton>
      </OutputBar>
      <StatusBar>
        <Svg w={14}><rect x=".5" y=".5" width="13" height="13" stroke="#cfe0ef" /></Svg>
        <StatusText>就绪</StatusText>
        <span>读/写</span>
      </StatusBar>
    </Page>
  );
}
